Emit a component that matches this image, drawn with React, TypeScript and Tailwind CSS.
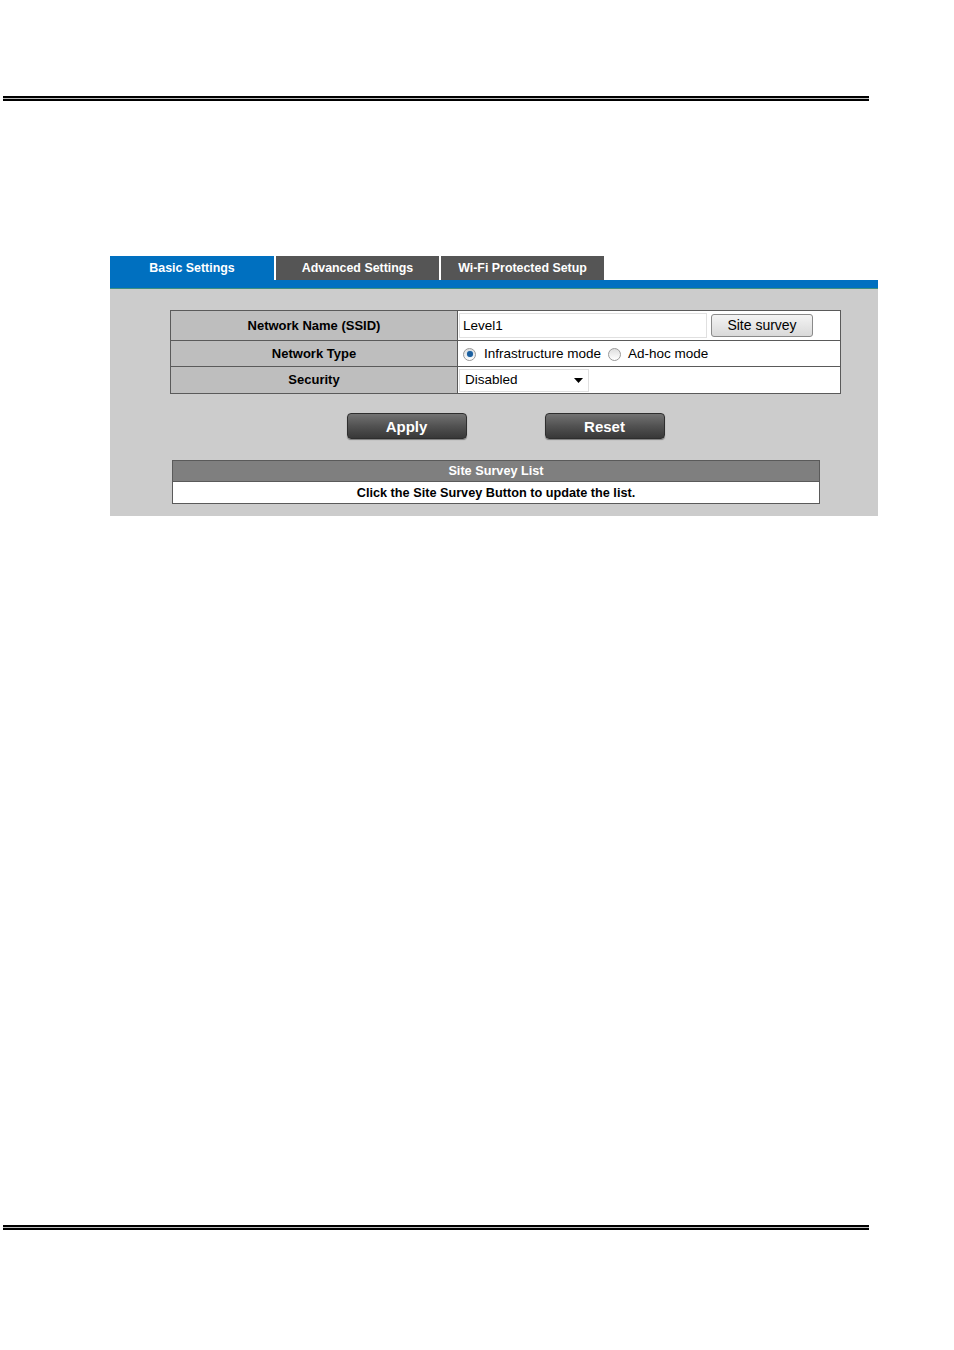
import { useState } from 'react';

const tabs = ['Basic Settings', 'Advanced Settings', 'Wi-Fi Protected Setup'];

function DoubleRule() {
  return (
    <div className="w-[866px] ml-[3px]">
      <div className="h-[2px] bg-black" />
      <div className="h-[1px] bg-[#bdbdbd]" />
      <div className="h-[2px] bg-black" />
    </div>
  );
}

function Radio({ checked }: { checked: boolean }) {
  return (
    <span className="inline-flex h-[13px] w-[13px] items-center justify-center rounded-full border border-[#9a9a9a] bg-gradient-to-b from-[#dedede] to-[#ffffff]">
      {checked && <span className="h-[6px] w-[6px] rounded-full bg-[#1c5f9e] shadow-[0_0_1px_#6ab0ee]" />}
    </span>
  );
}

function DarkButton({ label }: { label: string }) {
  return (
    <button className="h-[26px] w-[120px] rounded-[4px] border border-[#2e2e2e] bg-gradient-to-b from-[#737373] via-[#525252] to-[#383838] pt-[2px] text-[15px] font-bold text-white shadow-[0_1px_1px_rgba(0,0,0,0.4)]">
      {label}
    </button>
  );
}

export default function App() {
  const [active] = useState(0);
  const [mode, setMode] = useState('infra');

  return (
    <div className="min-h-[1350px] w-[954px] bg-white pt-[96px] font-['Liberation_Sans',Arial,sans-serif] text-black">
      <DoubleRule />

      <div className="ml-[110px] mt-[155px] w-[768px]">
        {/* tabs */}
        <div className="flex h-[24px]">
          {tabs.map((t, i) => (
            <div
              key={t}
              className={
                'flex items-center justify-center text-[12.4px] font-bold text-white ' +
                (i === active ? 'w-[164px] bg-[#0070c0]' : 'ml-[2px] w-[163px] bg-[#555555]')
              }
            >
              {t}
            </div>
          ))}
        </div>
        <div className="h-[9px] border-b border-[#3f8f80] bg-[#0070c0]" />

        {/* body */}
        <div className="bg-[#cccccc] pb-[12px] pt-[21px]">
          <table className="ml-[60px] w-[671px] border-collapse border border-[#5a5a5a] text-[13.5px]">
            <tbody>
              <tr className="h-[30px]">
                <td className="w-[287px] border border-[#5a5a5a] bg-[#bebebe] text-center text-[13px] font-bold">
                  Network Name (SSID)
                </td>
                <td className="border border-[#5a5a5a] bg-white px-[1px]">
                  <div className="flex items-center gap-[4px]">
                    <input
                      defaultValue="Level1"
                      className="h-[25px] w-[248px] border border-[#e0e0e0] px-[3px] text-[13.5px] outline-none"
                    />
                    <button className="h-[23px] w-[102px] rounded-[3px] border border-[#8a8a8a] bg-gradient-to-b from-[#f4f4f4] to-[#d9d9d9] text-[14px]">
                      Site survey
                    </button>
                  </div>
                </td>
              </tr>
              <tr className="h-[26px]">
                <td className="border border-[#5a5a5a] bg-[#bebebe] pt-[1px] text-center text-[13px] font-bold">
                  Network Type
                </td>
                <td className="border border-[#5a5a5a] bg-white pl-[5px] pt-[1px]">
                  <div className="flex items-center">
                    <span className="flex cursor-default" onClick={() => setMode('infra')}>
                      <Radio checked={mode === 'infra'} />
                    </span>
                    <span className="ml-[8px]">Infrastructure mode</span>
                    <span className="ml-[7px] flex cursor-default" onClick={() => setMode('adhoc')}>
                      <Radio checked={mode === 'adhoc'} />
                    </span>
                    <span className="ml-[7px]">Ad-hoc mode</span>
                  </div>
                </td>
              </tr>
              <tr className="h-[27px]">
                <td className="border border-[#5a5a5a] bg-[#bebebe] text-center text-[13px] font-bold">
                  Security
                </td>
                <td className="border border-[#5a5a5a] bg-white px-[1px]">
                  <div className="flex h-[23px] w-[130px] items-center justify-between border border-[#e0e0e0] pl-[5px] pr-[5px]">
                    <span>Disabled</span>
                    <svg width="9" height="5" viewBox="0 0 9 5">
                      <path d="M0 0h9L4.5 5z" fill="#000" />
                    </svg>
                  </div>
                </td>
              </tr>
            </tbody>
          </table>

          <div className="ml-[60px] mt-[19px] flex w-[671px] justify-center gap-[78px]">
            <DarkButton label="Apply" />
            <DarkButton label="Reset" />
          </div>

          <table className="ml-[62px] mt-[21px] w-[648px] border-collapse border border-[#5a5a5a] text-[12.7px] font-bold">
            <tbody>
              <tr className="h-[21px]">
                <td className="border border-[#5a5a5a] bg-[#7f7f7f] pt-[1px] text-center text-white">Site Survey List</td>
              </tr>
              <tr className="h-[22px]">
                <td className="border border-[#5a5a5a] bg-white pt-[1px] text-center">
                  Click the Site Survey Button to update the list.
                </td>
              </tr>
            </tbody>
          </table>
        </div>
      </div>

      <div className="mt-[709px]">
        <DoubleRule />
      </div>
    </div>
  );
}
